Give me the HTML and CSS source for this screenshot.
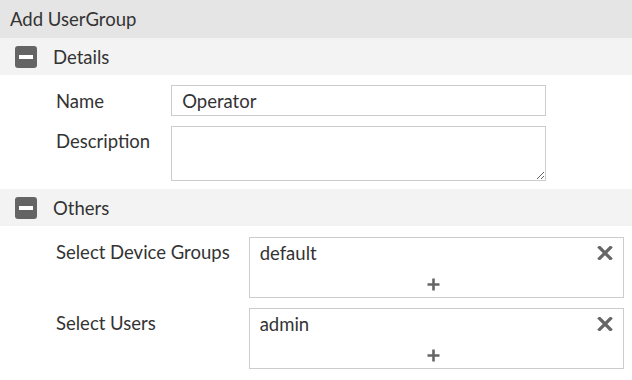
FILE: index.html
```html
<!DOCTYPE html>
<html>
<head>
<meta charset="utf-8">
<link rel="stylesheet" href="styles.css">
</head>
<body>
<div class="title">Add UserGroup</div>
<section class="section">
  <div class="sec-head"><span class="toggle"></span><span class="sec-name">Details</span></div>
  <div class="form form-details">
    <label class="lbl lbl-mid">Name</label>
    <input class="field" type="text" value="Operator">
    <label class="lbl">Description</label>
    <textarea class="field area"></textarea>
  </div>
</section>
<section class="section">
  <div class="sec-head"><span class="toggle"></span><span class="sec-name">Others</span></div>
  <div class="form form-last">
    <label class="lbl">Select Device Groups</label>
    <div class="picker">
      <div class="chip-row"><span class="chip">default</span>
        <svg class="remove" width="16" height="14" viewBox="0 0 16 14"><path d="M2.5 1.5 L13.5 12.5 M13.5 1.5 L2.5 12.5" stroke="#666" stroke-width="3.2" stroke-linecap="square"/></svg>
      </div>
      <div class="add-row"><svg width="13" height="13" viewBox="0 0 13 13"><path d="M6.5 0.5 V12.5 M0.5 6.5 H12.5" stroke="#666" stroke-width="2.6"/></svg></div>
    </div>
    <label class="lbl">Select Users</label>
    <div class="picker">
      <div class="chip-row"><span class="chip">admin</span>
        <svg class="remove" width="16" height="14" viewBox="0 0 16 14"><path d="M2.5 1.5 L13.5 12.5 M13.5 1.5 L2.5 12.5" stroke="#666" stroke-width="3.2" stroke-linecap="square"/></svg>
      </div>
      <div class="add-row"><svg width="13" height="13" viewBox="0 0 13 13"><path d="M6.5 0.5 V12.5 M0.5 6.5 H12.5" stroke="#666" stroke-width="2.6"/></svg></div>
    </div>
  </div>
</section>
</body>
</html>
```
FILE: styles.css
```css
html, body {
  margin: 0;
  padding: 0;
  background: #fff;
  font-family: Lato, "Open Sans", sans-serif;
  font-size: 18.5px;
  color: #333;
}
.title {
  height: 38px;
  line-height: 38px;
  padding-left: 10px;
  background: #e5e5e5;
  color: #333;
}
.sec-head {
  height: 37px;
  display: flex;
  align-items: center;
  background: #f3f3f3;
  padding-left: 15px;
}
.toggle {
  width: 22px;
  height: 22px;
  border-radius: 3px;
  background: #646464;
  display: flex;
  align-items: center;
  justify-content: center;
  margin-right: 16px;
}
.toggle::after {
  content: "";
  width: 14px;
  height: 4px;
  background: #fff;
}
.form {
  display: grid;
  grid-template-columns: max-content 375px;
  column-gap: 19px;
  row-gap: 10px;
  padding: 10px 0 8px 56px;
}
.form-details {
  column-gap: 21px;
}
.form-last {
  padding-top: 11px;
  padding-bottom: 0;
}
.lbl {
  line-height: 22px;
  padding-top: 4px;
}
.lbl-mid {
  padding-top: 5px;
}
.field {
  box-sizing: border-box;
  height: 31px;
  border: 1px solid #ccc;
  padding: 0 10px;
  font-family: inherit;
  font-size: 18.5px;
  color: #333;
  margin: 0;
  outline: none;
  background: #fff;
}
.area {
  height: 55px;
  resize: vertical;
  display: block;
}
.picker {
  box-sizing: border-box;
  height: 61px;
  border: 1px solid #ccc;
  padding: 4px 10px 0 10px;
}
.chip-row {
  height: 22px;
  line-height: 22px;
  display: flex;
  justify-content: space-between;
  align-items: center;
}
.add-row {
  display: flex;
  justify-content: center;
  margin-top: 14px;
  padding-right: 6px;
  height: 13px;
}
.add-row svg, .remove {
  display: block;
}
```
